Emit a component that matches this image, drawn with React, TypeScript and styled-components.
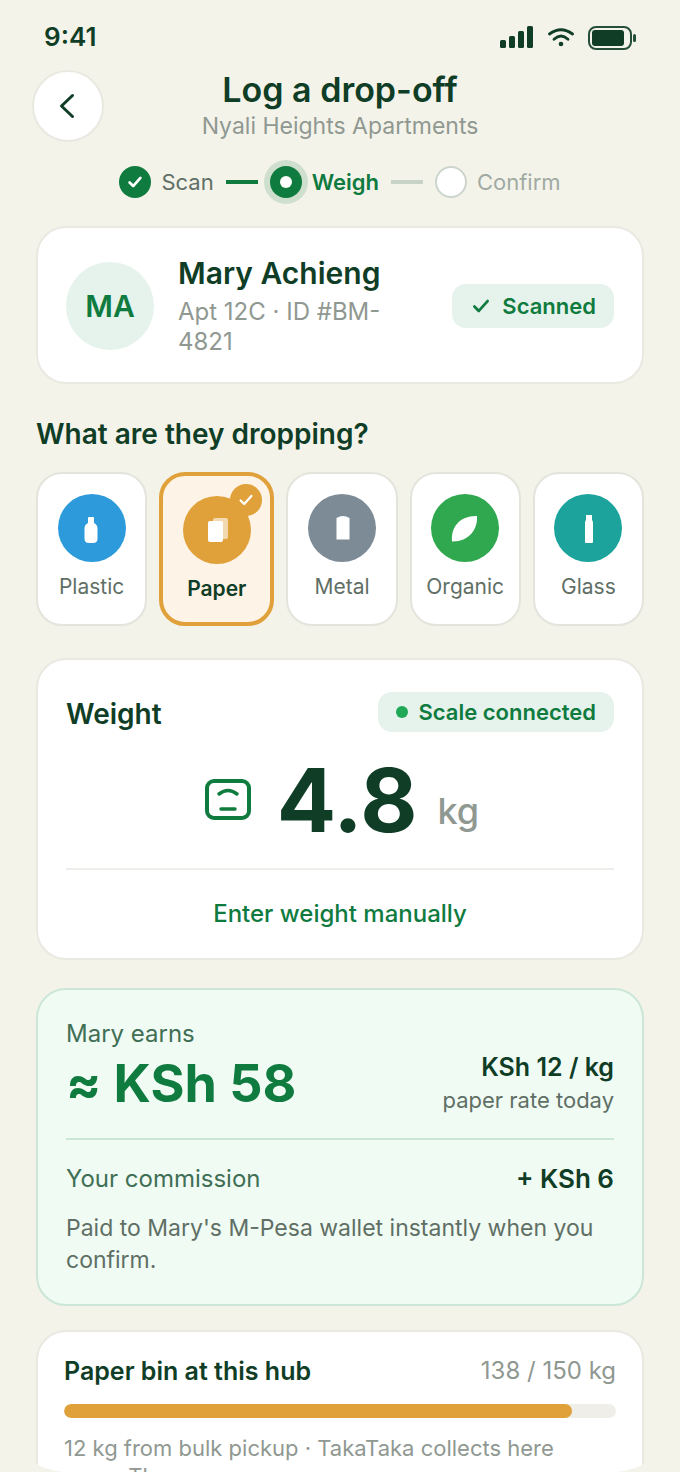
import React, { useState } from "react";
import styled, { createGlobalStyle } from "styled-components";

const color = {
  page: "#f4f3ea",
  ink: "#0f3d26",
  green: "#0f7b3f",
  greenSoft: "#e6f3ec",
  muted: "#8f9891",
  body: "#5f6f65",
  line: "#e9e9e1",
  amber: "#e0a13a",
};

const GlobalStyle = createGlobalStyle`
  *, *::before, *::after { box-sizing: border-box; }
  html, body { margin: 0; background: ${color.page}; }
  body { font-family: Inter, "Liberation Sans", sans-serif; color: ${color.ink}; }
  h1, h2, h3, p { margin: 0; }
  button { font: inherit; color: inherit; cursor: pointer; margin: 0; }
  svg { display: block; flex: none; }
`;

const Screen = styled.div`
  height: 100vh;
  display: flex;
  flex-direction: column;
  overflow: hidden;
  border-radius: 0 0 68px 68px;
  background: ${color.page};
`;

const StatusBar = styled.div`
  flex: none;
  height: 70px;
  padding: 4px 44px 0;
  display: flex;
  align-items: center;
  justify-content: space-between;
`;

const Clock = styled.span`
  font-size: 26px;
  line-height: 32px;
  font-weight: 600;
`;

const StatusIcons = styled.div`
  display: flex;
  align-items: center;
  gap: 14px;
  padding-top: 2px;
`;

const Header = styled.header`
  flex: none;
  display: grid;
  grid-template-columns: 72px 1fr 72px;
  padding: 0 32px;
`;

const BackButton = styled.button`
  width: 72px;
  height: 72px;
  padding: 0;
  border: 2px solid ${color.line};
  border-radius: 50%;
  background: #fff;
  display: flex;
  align-items: center;
  justify-content: center;
`;

const Titles = styled.div`
  text-align: center;
`;

const Title = styled.h1`
  font-size: 34px;
  line-height: 40px;
  font-weight: 600;
`;

const Subtitle = styled.p`
  font-size: 23px;
  line-height: 32px;
  color: ${color.muted};
`;

const Stepper = styled.ol`
  flex: none;
  list-style: none;
  margin: 24px 0 28px;
  padding: 0;
  display: flex;
  align-items: center;
  justify-content: center;
  gap: 12px;
`;

type StepState = "done" | "current" | "next";

const stepText = { done: color.body, current: color.green, next: "#a0aaa2" };

const StepItem = styled.li<{ $state: StepState }>`
  display: flex;
  align-items: center;
  gap: 10px;
  font-size: 22px;
  line-height: 32px;
  font-weight: ${(p) => (p.$state === "current" ? 600 : 400)};
  color: ${(p) => stepText[p.$state]};
`;

const StepDot = styled.span<{ $state: StepState }>`
  width: 32px;
  height: 32px;
  border-radius: 50%;
  display: flex;
  align-items: center;
  justify-content: center;
  background: ${(p) => (p.$state === "next" ? "#fff" : color.green)};
  border: ${(p) => (p.$state === "next" ? "2px solid #cbd5cb" : "0")};
  box-shadow: ${(p) => (p.$state === "current" ? "0 0 0 6px #cfdfce" : "none")};
`;

const StepLine = styled.li<{ $done?: boolean }>`
  width: 32px;
  height: 4px;
  background: ${(p) => (p.$done ? color.green : "#c8d3c8")};
`;

const Content = styled.main`
  flex: 1;
  min-height: 0;
  overflow-y: auto;
  scrollbar-width: none;
  padding: 0 36px 28px;
`;

const Card = styled.section`
  background: #fff;
  border: 2px solid ${color.line};
  border-radius: 30px;
`;

const MemberCard = styled(Card)`
  display: flex;
  align-items: center;
  gap: 24px;
  padding: 27px 28px 25px;
`;

const Avatar = styled.div`
  flex: none;
  width: 88px;
  height: 88px;
  border-radius: 50%;
  background: ${color.greenSoft};
  color: ${color.green};
  display: flex;
  align-items: center;
  justify-content: center;
  font-size: 30px;
  font-weight: 600;
`;

const MemberText = styled.div`
  flex: 1;
  min-width: 0;
`;

const MemberName = styled.h2`
  font-size: 30px;
  line-height: 36px;
  font-weight: 600;
  margin-bottom: 6px;
`;

const MemberMeta = styled.p`
  font-size: 24px;
  line-height: 30px;
  color: ${color.muted};
`;

const Chip = styled.span<{ $tall?: boolean }>`
  flex: none;
  height: ${(p) => (p.$tall ? 44 : 40)}px;
  padding: 0 18px;
  border-radius: 14px;
  background: ${color.greenSoft};
  color: ${color.green};
  display: flex;
  align-items: center;
  gap: 10px;
  font-size: 22px;
  font-weight: 600;
  white-space: nowrap;
`;

const LiveDot = styled.span`
  width: 12px;
  height: 12px;
  border-radius: 50%;
  background: #1fa855;
`;

const SectionTitle = styled.h2`
  margin: 32px 0 20px;
  font-size: 28px;
  line-height: 36px;
  font-weight: 600;
`;

const Materials = styled.div`
  display: flex;
  gap: 12px;
  margin-bottom: 32px;
`;

const Tile = styled.button<{ $selected: boolean }>`
  position: relative;
  flex: 1 1 0;
  min-width: 0;
  padding: 20px 0;
  border: ${(p) => (p.$selected ? `4px solid ${color.amber}` : "2px solid #e3e4dc")};
  border-radius: 26px;
  background: ${(p) => (p.$selected ? "#fdf3e6" : "#fff")};
  color: ${(p) => (p.$selected ? color.ink : color.body)};
  font-size: 21px;
  line-height: 26px;
  font-weight: ${(p) => (p.$selected ? 600 : 400)};
  display: flex;
  flex-direction: column;
  align-items: center;
  justify-content: flex-start;
  gap: 12px;
`;

const TileDisc = styled.span<{ $fill: string }>`
  width: 68px;
  height: 68px;
  border-radius: 50%;
  background: ${(p) => p.$fill};
`;

const TileBadge = styled.span`
  position: absolute;
  top: 8px;
  right: 8px;
  width: 32px;
  height: 32px;
  border-radius: 50%;
  background: ${color.amber};
  display: flex;
  align-items: center;
  justify-content: center;
`;

const WeightCard = styled(Card)`
  padding: 32px 28px 24px;
  margin-bottom: 28px;
`;

const SplitRow = styled.div<{ $align?: "flex-start" | "flex-end" }>`
  display: flex;
  align-items: ${(p) => p.$align ?? "center"};
  justify-content: space-between;
  gap: 16px;
`;

const CardTitle = styled.h2`
  font-size: 28px;
  line-height: 44px;
  font-weight: 600;
`;

const Reading = styled.div`
  display: flex;
  align-items: center;
  justify-content: center;
  gap: 24px;
  padding: 20px 0 24px;
  border-bottom: 2px solid #eeeeeb;
`;

const ReadingFigure = styled.div`
  display: flex;
  align-items: flex-end;
  gap: 20px;
`;

const ReadingValue = styled.span`
  font-size: 88px;
  line-height: 88px;
  font-weight: 700;
`;

const ReadingUnit = styled.span`
  padding-bottom: 11px;
  font-size: 36px;
  line-height: 44px;
  font-weight: 500;
  color: ${color.muted};
`;

const ManualButton = styled.button`
  display: block;
  width: 100%;
  margin-top: 24px;
  padding: 4px 0;
  border: 0;
  background: none;
  color: ${color.green};
  font-size: 24px;
  line-height: 32px;
  font-weight: 500;
`;

const EarningsCard = styled(Card)`
  padding: 28px;
  margin-bottom: 24px;
  background: #f0fbf4;
  border-color: #cbe6d6;
`;

const EarnRow = styled(SplitRow)`
  padding-bottom: 22px;
  margin-bottom: 22px;
  border-bottom: 2px solid #cbe6d6;
`;

const EarnLabel = styled.p`
  font-size: 24px;
  line-height: 32px;
  color: #3f6f55;
`;

const EarnAmount = styled.p`
  padding-top: 2px;
  font-size: 52px;
  line-height: 64px;
  font-weight: 700;
  font-variant-ligatures: no-contextual;
  color: ${color.green};
`;

const Rate = styled.div`
  text-align: right;
`;

const StrongFigure = styled.p<{ $size: number }>`
  font-size: ${(p) => p.$size}px;
  line-height: 34px;
  font-weight: 600;
`;

const RateNote = styled.p`
  font-size: 22px;
  line-height: 32px;
  color: ${color.body};
`;

const PayoutNote = styled.p`
  margin-top: 16px;
  font-size: 23px;
  line-height: 32px;
  color: ${color.body};
`;

const BinCard = styled(Card)`
  padding: 24px 26px;
`;

const BinTitle = styled.h2`
  font-size: 25px;
  line-height: 30px;
  font-weight: 600;
`;

const BinAmount = styled.span`
  font-size: 24px;
  line-height: 30px;
  color: ${color.muted};
`;

const Track = styled.div`
  height: 14px;
  margin: 18px 0 16px;
  border-radius: 7px;
  background: #efeee8;
  overflow: hidden;
`;

const TrackFill = styled.div`
  height: 100%;
  border-radius: 7px;
  background: ${color.amber};
`;

const BinNote = styled.p`
  font-size: 22px;
  line-height: 28px;
  color: ${color.muted};
`;

const Check = ({ size, stroke, width = 3 }: { size: number; stroke: string; width?: number }) => (
  <svg width={size} height={size} viewBox="0 0 20 20" fill="none" aria-hidden="true">
    <path d="M4 10.5 8 14.5 16 5.5" stroke={stroke} strokeWidth={width} strokeLinecap="round" strokeLinejoin="round" />
  </svg>
);

const materials = [
  {
    name: "Plastic",
    fill: "#2d9bdb",
    icon: <path d="M30 24q0-1 1-1h4q1 0 1 1v5q3.500 1.500 3.500 5.500v10q0 4.500-4.500 4.500h-4q-4.500 0-4.500-4.500v-10q0-4 3.500-5.500z" fill="#fff" />,
  },
  {
    name: "Paper",
    fill: color.amber,
    icon: (
      <>
        <rect x="30" y="22" width="15" height="21" rx="2" fill="#fff" opacity="0.6" />
        <rect x="25" y="25" width="15" height="21" rx="2" fill="#fff" />
      </>
    ),
  },
  {
    name: "Metal",
    fill: "#7d8b97",
    icon: <path d="M28.500 24q6.500-4 13 0v21.500h-13z" fill="#fff" />,
  },
  {
    name: "Organic",
    fill: "#2fa84f",
    icon: <path d="M46 22c1 14-9 26-25 25.500C19.500 33 29 21.500 46 22z" fill="#fff" />,
  },
  {
    name: "Glass",
    fill: "#1ba39c",
    icon: <path d="M32 21h6v5q1 1 1 3v19q0 1-1 1h-6q-1 0-1-1v-19q0-2 1-3z" fill="#fff" />,
  },
];

export default function App() {
  const [selected, setSelected] = useState("Paper");
  const stored = 138;
  const capacity = 150;

  return (
    <>
      <GlobalStyle />
      <Screen>
        <StatusBar>
          <Clock>9:41</Clock>
          <StatusIcons>
            <svg width="34" height="24" viewBox="0 0 34 24" fill={color.ink} aria-hidden="true">
              <rect x="0" y="14" width="6" height="8" rx="1.500" />
              <rect x="9" y="10" width="6" height="12" rx="1.500" />
              <rect x="18" y="5" width="6" height="17" rx="1.500" />
              <rect x="27" y="0" width="6" height="22" rx="1.500" />
            </svg>
            <svg width="26" height="24" viewBox="0 0 26 24" fill="none" stroke={color.ink} strokeWidth="2.800" strokeLinecap="round" aria-hidden="true">
              <path d="M1.500 8Q13 -0.500 24.500 8" />
              <path d="M6 13.200Q13 6.800 20 13.200" />
              <circle cx="13" cy="18" r="2.300" fill={color.ink} stroke="none" />
            </svg>
            <svg width="48" height="24" viewBox="0 0 48 24" fill="none" aria-hidden="true">
              <rect x="1" y="1" width="42" height="22" rx="7" stroke={color.ink} strokeOpacity="0.9" strokeWidth="2" />
              <rect x="4" y="4" width="32" height="16" rx="3" fill={color.ink} />
              <rect x="45" y="8" width="3" height="8" rx="1.500" fill={color.ink} fillOpacity="0.9" />
            </svg>
          </StatusIcons>
        </StatusBar>

        <Header>
          <BackButton type="button" aria-label="Back">
            <svg width="24" height="28" viewBox="0 0 24 28" fill="none" aria-hidden="true">
              <path d="M16.500 3.500 5.500 14l11 10.500" stroke={color.ink} strokeWidth="3" strokeLinecap="round" strokeLinejoin="round" />
            </svg>
          </BackButton>
          <Titles>
            <Title>Log a drop-off</Title>
            <Subtitle>Nyali Heights Apartments</Subtitle>
          </Titles>
        </Header>

        <Stepper>
          <StepItem $state="done">
            <StepDot $state="done">
              <Check size={18} stroke="#fff" />
            </StepDot>
            Scan
          </StepItem>
          <StepLine $done aria-hidden="true" />
          <StepItem $state="current" aria-current="step">
            <StepDot $state="current">
              <svg width="12" height="12" viewBox="0 0 12 12" aria-hidden="true">
                <circle cx="6" cy="6" r="6" fill="#fff" />
              </svg>
            </StepDot>
            Weigh
          </StepItem>
          <StepLine aria-hidden="true" />
          <StepItem $state="next">
            <StepDot $state="next" />
            Confirm
          </StepItem>
        </Stepper>

        <Content>
          <MemberCard>
            <Avatar>MA</Avatar>
            <MemberText>
              <MemberName>Mary Achieng</MemberName>
              <MemberMeta>Apt 12C · ID #BM-4821</MemberMeta>
            </MemberText>
            <Chip $tall>
              <Check size={22} stroke={color.green} width={2.5} />
              Scanned
            </Chip>
          </MemberCard>

          <SectionTitle>What are they dropping?</SectionTitle>
          <Materials>
            {materials.map((m) => (
              <Tile
                key={m.name}
                type="button"
                $selected={m.name === selected}
                aria-pressed={m.name === selected}
                onClick={() => setSelected(m.name)}
              >
                <TileDisc $fill={m.fill}>
                  <svg width="68" height="68" viewBox="0 0 68 68" aria-hidden="true">
                    {m.icon}
                  </svg>
                </TileDisc>
                {m.name}
                {m.name === selected && (
                  <TileBadge>
                    <Check size={18} stroke="#fff" width={2.5} />
                  </TileBadge>
                )}
              </Tile>
            ))}
          </Materials>

          <WeightCard>
            <SplitRow $align="flex-start">
              <CardTitle>Weight</CardTitle>
              <Chip>
                <LiveDot />
                Scale connected
              </Chip>
            </SplitRow>
            <Reading>
              <svg width="52" height="56" viewBox="1 -1 52 56" fill="none" stroke={color.green} strokeWidth="4" strokeLinecap="round" aria-hidden="true">
                <rect x="7" y="8" width="42" height="37" rx="7" />
                <path d="M19 21q9-7 18 0" strokeWidth="3.500" />
                <path d="M21 36h14" strokeWidth="3.500" />
              </svg>
              <ReadingFigure>
                <ReadingValue>4.8</ReadingValue>
                <ReadingUnit>kg</ReadingUnit>
              </ReadingFigure>
            </Reading>
            <ManualButton type="button">Enter weight manually</ManualButton>
          </WeightCard>

          <EarningsCard>
            <EarnRow $align="flex-end">
              <div>
                <EarnLabel>Mary earns</EarnLabel>
                <EarnAmount>≈ KSh 58</EarnAmount>
              </div>
              <Rate>
                <StrongFigure $size={25}>KSh 12 / kg</StrongFigure>
                <RateNote>paper rate today</RateNote>
              </Rate>
            </EarnRow>
            <SplitRow>
              <EarnLabel>Your commission</EarnLabel>
              <StrongFigure $size={26}>+ KSh 6</StrongFigure>
            </SplitRow>
            <PayoutNote>Paid to Mary's M-Pesa wallet instantly when you confirm.</PayoutNote>
          </EarningsCard>

          <BinCard>
            <SplitRow>
              <BinTitle>Paper bin at this hub</BinTitle>
              <BinAmount>{stored} / {capacity} kg</BinAmount>
            </SplitRow>
            <Track role="progressbar" aria-label="Paper bin fill" aria-valuenow={stored} aria-valuemin={0} aria-valuemax={capacity}>
              <TrackFill style={{ width: `${(stored / capacity) * 100}%` }} />
            </Track>
            <BinNote>12 kg from bulk pickup · TakaTaka collects here every Thu.</BinNote>
          </BinCard>
        </Content>
      </Screen>
    </>
  );
}
